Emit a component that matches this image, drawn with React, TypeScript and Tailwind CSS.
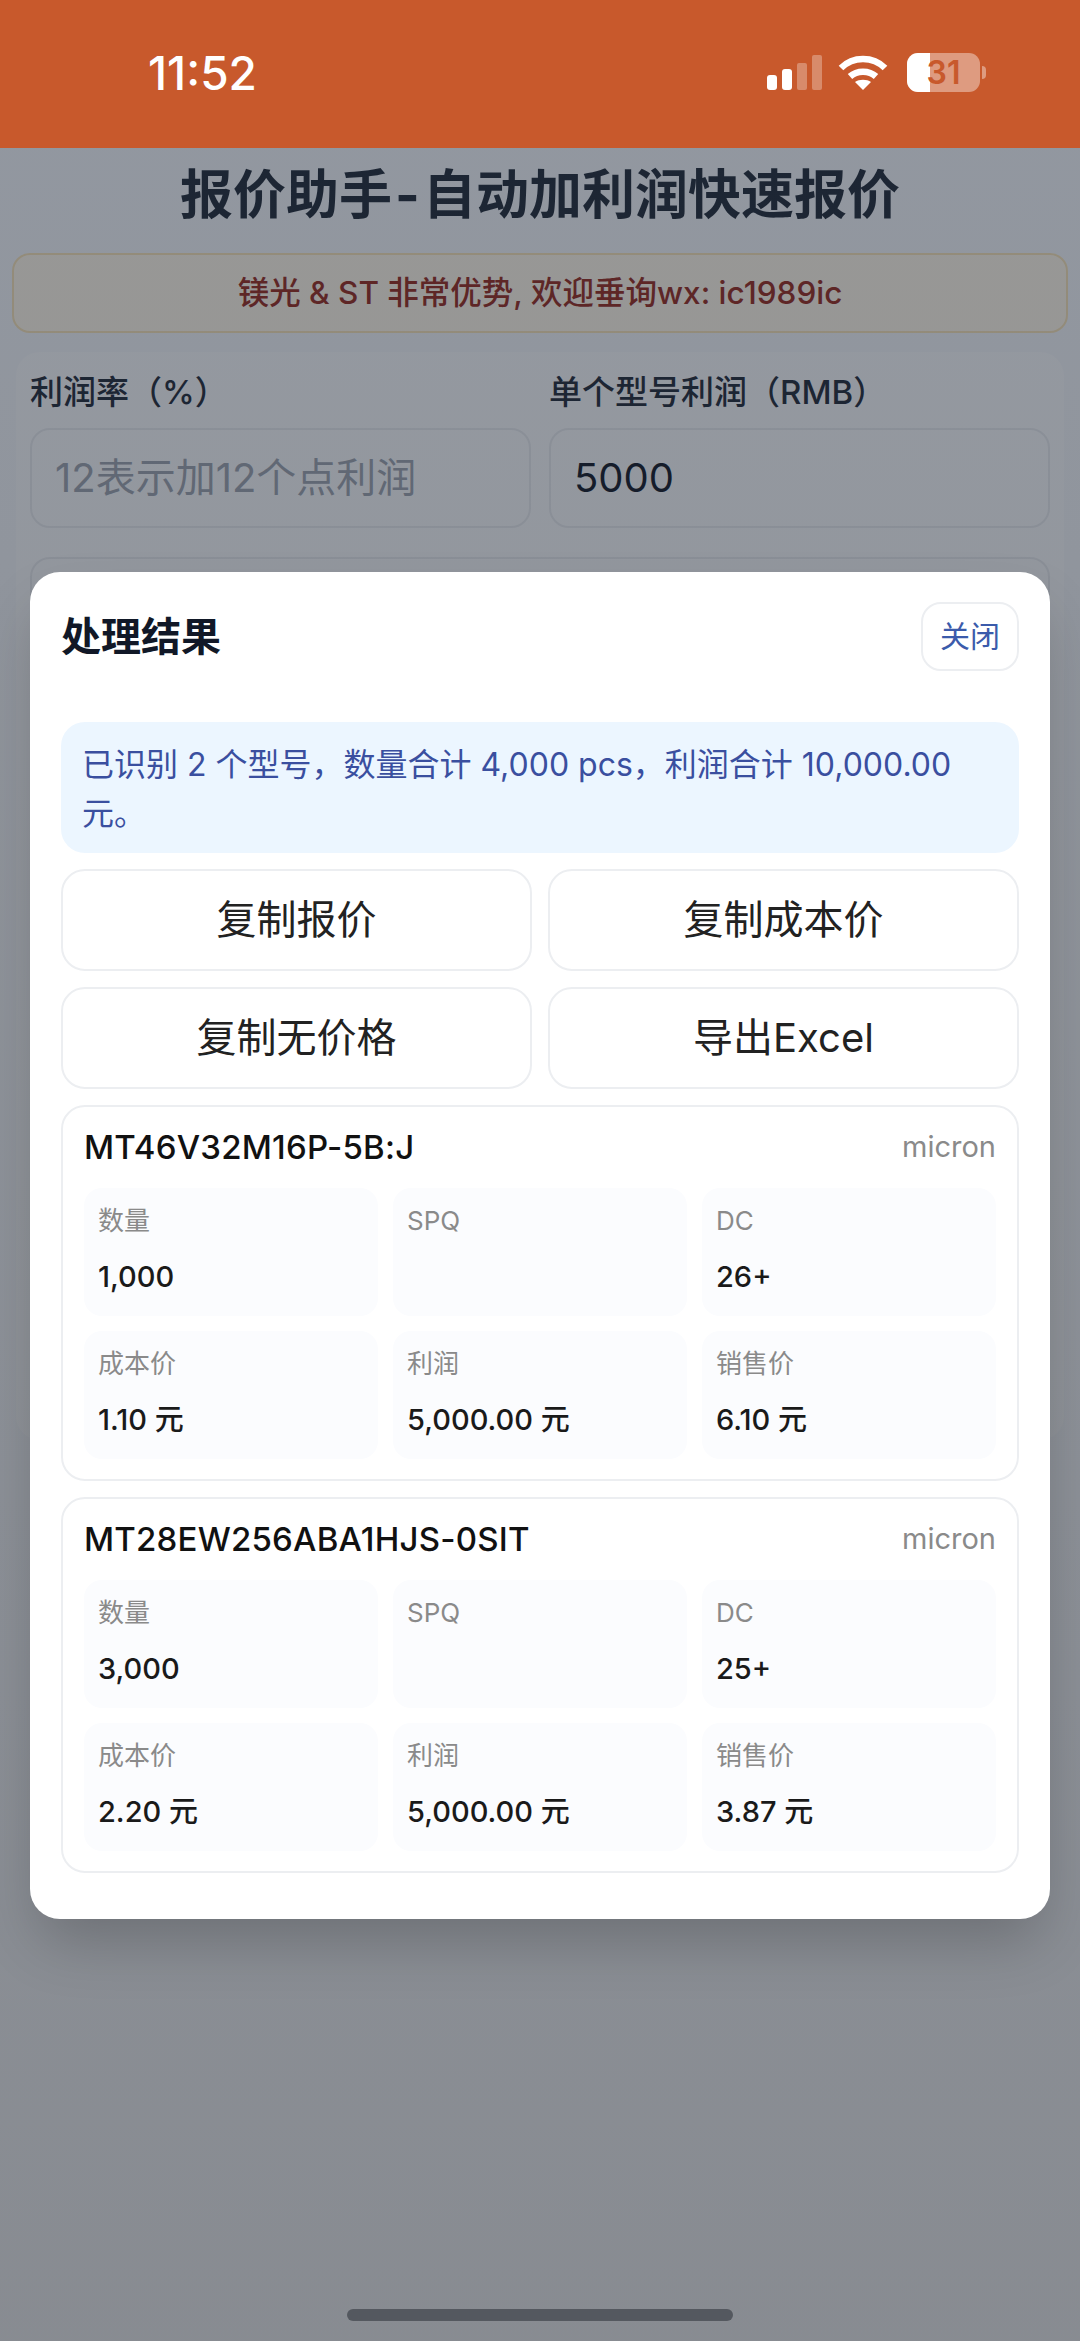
import { Fragment } from 'react';

const CARDS = [
  {
    model: 'MT46V32M16P-5B:J',
    cells: [
      { label: '数量', value: '1,000' },
      { label: 'SPQ', value: '' },
      { label: 'DC', value: '26+' },
      { label: '成本价', value: '1.10 元' },
      { label: '利润', value: '5,000.00 元' },
      { label: '销售价', value: '6.10 元' },
    ],
  },
  {
    model: 'MT28EW256ABA1HJS-0SIT',
    cells: [
      { label: '数量', value: '3,000' },
      { label: 'SPQ', value: '' },
      { label: 'DC', value: '25+' },
      { label: '成本价', value: '2.20 元' },
      { label: '利润', value: '5,000.00 元' },
      { label: '销售价', value: '3.87 元' },
    ],
  },
];

const ACTIONS = ['复制报价', '复制成本价', '复制无价格', '导出Excel'];

function StatusIcons() {
  return (
    <div className="flex items-center">
      <svg width="56" height="36" viewBox="0 0 56 36" fill="#fff">
        <rect x="0" y="20" width="10" height="15" rx="3" />
        <rect x="15" y="14" width="10" height="21" rx="3" />
        <rect x="30" y="8" width="10" height="27" rx="2" opacity="0.3" />
        <rect x="45" y="0" width="10" height="35" rx="2" opacity="0.3" />
      </svg>
      <svg className="ml-[15px]" width="50" height="36" viewBox="0 0 50 36" fill="none" stroke="#fff" strokeWidth="6.5">
        <path d="M3 13C15 1 35 1 47 13" />
        <path d="M12 21.5C19 15 31 15 38 21.5" />
        <path d="M25 35L17 27C21 24 29 24 33 27Z" fill="#fff" stroke="none" />
      </svg>
      <div className="relative ml-[19px] flex h-[39px] w-[73px] items-center justify-center overflow-hidden rounded-[11px] bg-white/40">
        <div className="absolute inset-y-0 left-0 w-[23px] bg-white" />
        <span className="relative text-[32px] leading-none font-semibold text-[#c8592c]">31</span>
      </div>
      <div className="ml-[2px] h-[13px] w-[4px] rounded-r-full bg-white/40" />
    </div>
  );
}

export default function App() {
  return (
    <div className="relative h-[2341px] w-[1080px] overflow-hidden bg-[#f4f7fb] font-['Inter','Noto_Sans_CJK_SC',sans-serif]">
      {/* Status bar */}
      <div className="relative z-20 flex h-[148px] items-start justify-between bg-[#c8592c] pt-[53px] pr-[94px] pl-[148px]">
        <span className="text-[46px] leading-[40px] font-medium text-white">11:52</span>
        <StatusIcons />
      </div>

      {/* Page behind the dialog */}
      <h1 className="mt-[18px] text-center text-[53px] leading-[58px] font-bold text-[#1f2937]">
        报价助手<span className="mx-[3px]">-</span>自动加利润快速报价
      </h1>
      <div className="mx-3 mt-[29px] flex h-[80px] items-center justify-center rounded-[18px] border-2 border-[#f7e3b8] bg-[#fff8ea] text-[31.5px] font-medium text-[#962a1e]">
        镁光 & ST 非常优势, 欢迎垂询wx: ic1989ic
      </div>
      <div className="mx-4 mt-[19px] h-[1088px] rounded-[24px] bg-[#f9fbfd] px-[14px] pt-[20px]">
        <div className="grid grid-cols-2 gap-x-[18px]">
          <label className="text-[33px] leading-[40px] font-medium text-[#1f2937]">利润率（%）</label>
          <label className="text-[33px] leading-[40px] font-medium text-[#1f2937]">单个型号利润（RMB）</label>
          <div className="mt-[16px] flex h-[100px] items-center rounded-[20px] border-2 border-[#e8ebef] bg-[#f9fbfd] px-[23px] text-[40px] text-[#9ca3af]">12表示加12个点利润</div>
          <div className="mt-[16px] flex h-[100px] items-center rounded-[20px] border-2 border-[#e8ebef] bg-[#f9fbfd] px-[23px] text-[40px] text-[#111827]">5000</div>
        </div>
        <div className="mt-[29px] h-[300px] rounded-[20px] border-2 border-[#e8ebef]" />
      </div>

      {/* Overlay */}
      <div className="absolute inset-x-0 top-[148px] bottom-0 z-10 bg-linear-to-b from-[#1a2230]/45 to-[#1c2028]/50">
        <div className="absolute top-[424px] right-[30px] left-[30px] rounded-[30px] bg-white px-[31px] pt-[30px] pb-[46px] shadow-[0_30px_60px_-10px_rgba(0,0,0,0.22)]">
          <div className="flex items-center justify-between">
            <h2 className="text-[40px] leading-[56px] font-bold text-[#111827]">处理结果</h2>
            <button className="h-[69px] w-[98px] rounded-[20px] border-2 border-[#eceef1] text-[30px] text-[#3b5bab]">关闭</button>
          </div>
          <div className="mt-[51px] rounded-[24px] bg-[#ecf6ff] px-[21px] pt-[18px] pb-[15px] text-[32px] leading-[49px] text-[#3a4f9f]">
            已识别 2 个型号，数量合计 4,000 pcs，利润合计 10,000.00 元。
          </div>
          <div className="mt-[16px] grid grid-cols-2 gap-[16px]">
            {ACTIONS.map((a) => (
              <button key={a} className="h-[102px] rounded-[24px] border-2 border-[#eceef1] text-[40px] text-[#222]">
                {a}
              </button>
            ))}
          </div>
          {CARDS.map((card) => (
            <div key={card.model} className="mt-[16px] h-[376px] rounded-[24px] border-2 border-[#eceef1] px-[21px] pt-[18px]">
              <div className="flex items-center justify-between">
                <span className="text-[33px] leading-[44px] font-medium tracking-[0.2px] text-[#111]">{card.model}</span>
                <span className="text-[29px] text-[#8a8a8a]">micron</span>
              </div>
              <div className="mt-[19px] grid grid-cols-3 gap-x-[15px] gap-y-[15px]">
                {card.cells.map((cell) => (
                  <Fragment key={cell.label}>
                    <div className="h-[128px] rounded-[18px] bg-[#fbfcfe] px-[14px] pt-[16px]">
                      <div className="text-[26px] leading-[34px] text-[#8a8a8a]">{cell.label}</div>
                      <div className="mt-[19px] text-[29px] leading-[40px] font-[550] text-[#1a1a1a]">{cell.value}</div>
                    </div>
                  </Fragment>
                ))}
              </div>
            </div>
          ))}
        </div>
        <div className="absolute bottom-[20px] left-[347px] h-[12px] w-[386px] rounded-full bg-[#54585f]" />
      </div>
    </div>
  );
}
